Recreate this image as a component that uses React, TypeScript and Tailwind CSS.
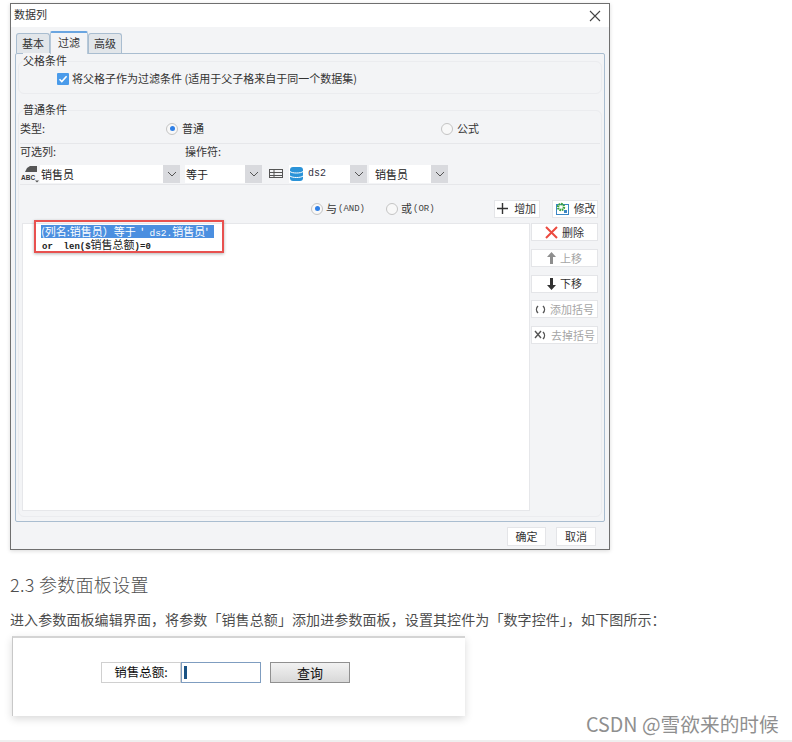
const cjk = "font-['Noto_Sans_CJK_SC','Noto_Sans',sans-serif]";

const Chevron = () => (
  <svg width="10" height="6" viewBox="0 0 10 6" fill="none" stroke="#555" strokeWidth="1">
    <path d="M1 1l4 4 4-4" />
  </svg>
);

const Combo = ({ w, text, textClass = "pl-px text-[11px] text-[#222]" }: { w: string; text: string; textClass?: string }) => (
  <div className={`${w} h-[18px] flex bg-white shrink-0`}>
    <div className={`flex-1 leading-[18px] whitespace-nowrap overflow-hidden ${textClass}`}>{text}</div>
    <div className="w-[17px] bg-[#d9dade] flex items-center justify-center">
      <Chevron />
    </div>
  </div>
);

const Radio = ({ on }: { on?: boolean }) => (
  <span className="w-[12px] h-[12px] rounded-full border border-[#c4c4c4] bg-[#f8f8f8] flex items-center justify-center shrink-0">
    {on && <span className="w-[5px] h-[5px] rounded-full bg-[#2f7fe6]" />}
  </span>
);

const SideButton = ({ icon, label, muted }: { icon: React.ReactNode; label: string; muted?: boolean }) => (
  <div className={`h-[18px] bg-white border border-[#e4e5e8] flex items-center justify-center gap-[4px] text-[11px] whitespace-nowrap ${muted ? "text-[#a5a5a5]" : "text-[#333]"}`}>
    {icon}
    <span>{label}</span>
  </div>
);

const Legend = ({ text }: { text: string }) => (
  <div className="absolute left-[4px] top-[-9px] text-[11px] leading-[14px] text-[#333] bg-[#f3f4f6] pr-px">{text}</div>
);

const Tab = ({ text, active }: { text: string; active?: boolean }) => (
  <div
    className={`flex items-center justify-center text-[11px] text-[#333] ${
      active
        ? "w-[38px] h-[23px] bg-[#f3f4f6] border-t-2 border-x border-t-[#6aa5e0] border-x-[#b6c8d8] rounded-t-[2px] pb-[3px] z-10 -mb-px"
        : "w-[34px] h-[20px] bg-[#e2e6ea] border-t border-x border-[#a9bdd0] rounded-t-[3px]"
    }`}
  >
    {text}
  </div>
);

export default function App() {
  return (
    <div className={`relative w-[792px] h-[742px] bg-white overflow-hidden ${cjk}`}>
      {/* dialog screenshot */}
      <div className="ml-[10px] mt-[3px] w-[600px] h-[547px] border border-[#6f6f6f] shadow-[0_1px_4px_rgba(0,0,0,0.15)] bg-[#f3f4f6] flex flex-col">
        <div className="h-[23px] bg-white flex items-center justify-between pl-[3px] pr-[8px] shrink-0">
          <span className="text-[11px] text-[#333] -mt-[2px]">数据列</span>
          <svg width="12" height="12" viewBox="0 0 12 12" stroke="#444" strokeWidth="1.1">
            <path d="M1 1l10 10M11 1L1 11" />
          </svg>
        </div>

        <div className="flex pl-[5px] items-end h-[26px] shrink-0">
          <Tab text="基本" />
          <Tab text="过滤" active />
          <Tab text="高级" />
        </div>

        {/* tab panel */}
        <div className="ml-[4px] w-[590px] h-[469px] border border-[#a9bdd0] rounded-[2px] px-[2px] pt-[7px] shrink-0 flex flex-col">
          <div className="relative h-[33px] border border-[#ebecef] rounded-[6px] flex items-center pl-[38px] pt-[2px] gap-[3px] shrink-0">
            <Legend text="父格条件" />
            <span className="w-[12px] h-[12px] bg-[#4a9bea] rounded-[1px] flex items-center justify-center shrink-0">
              <svg width="10" height="10" viewBox="0 0 10 10" fill="none" stroke="white" strokeWidth="1.5">
                <path d="M1.5 5.2l2.3 2.4 4.8-5.4" />
              </svg>
            </span>
            <span className="text-[11px] text-[#333] whitespace-nowrap">将父格子作为过滤条件 (适用于父子格来自于同一个数据集)</span>
          </div>

          <div className="relative mt-[16px] h-[407px] border border-[#ebecef] rounded-[6px] flex flex-col shrink-0">
            <Legend text="普通条件" />
            {/* type row */}
            <div className="h-[33px] flex items-center border-b border-[#e6e7ea] mx-px shrink-0 pt-[3px]">
              <span className="w-[146px] text-[11px] text-[#333]">类型:</span>
              <Radio on />
              <span className="ml-[4px] text-[11px] text-[#333]">普通</span>
              <span className="ml-[237px]"><Radio /></span>
              <span className="ml-[4px] text-[11px] text-[#333]">公式</span>
            </div>
            {/* column labels */}
            <div className="h-[21px] flex items-center text-[11px] text-[#333] mx-px shrink-0 pb-[7px]">
              <span className="w-[165px]">可选列:</span>
              <span>操作符:</span>
            </div>
            {/* combos */}
            <div className="h-[20px] flex items-start mx-px border-b border-[#e6e7ea] shrink-0">
              <svg width="20" height="18" viewBox="0 0 20 18" className="shrink-0">
                <path d="M7 3l3-2h7v6H8L5 7z" fill="#555" />
                <text x="1" y="15" fontSize="6.5" fontWeight="700" fill="#333" fontFamily="Liberation Sans">ABC</text>
                <path d="M15 15.500h4l-2 2z" fill="#555" />
              </svg>
              <Combo w="w-[140px]" text="销售员" />
              <div className="w-[5px] shrink-0" />
              <Combo w="w-[77px]" text="等于" />
              <div className="w-[7px] shrink-0" />
              <svg width="15" height="18" viewBox="0 0 15 18" fill="none" stroke="#555" className="shrink-0">
                <rect x=".5" y="4.500" width="13" height="8" />
                <path d="M.5 7.500h13M.5 10.500h13M5 4.500v8" />
              </svg>
              <span className="w-[5px] shrink-0" />
              <div className="flex h-[18px] w-[78px] bg-white shrink-0">
                <svg width="15" height="18" viewBox="0 0 15 18" className="shrink-0">
                  <rect x="1" y="2" width="13" height="14" rx="3" fill="#2b93d8" />
                  <path d="M1 6.500c2 2 11 2 13 0M1 11c2 2 11 2 13 0" fill="none" stroke="white" strokeWidth="1" />
                </svg>
                <Combo w="w-[63px]" text="ds2" textClass="pl-[4px] font-['Liberation_Mono',monospace] text-[10px] text-[#334]" />
              </div>
              <Combo w="w-[79px] ml-[2px]" text="销售员" textClass="pl-[6px] text-[11px] text-[#222]" />
            </div>
            {/* and/or row */}
            <div className="h-[38px] flex items-center mx-px shrink-0 pt-[9px]">
              <span className="ml-[291px]"><Radio on /></span>
              <span className="ml-[3px] text-[11px] text-[#333]">与</span>
              <span className="ml-px mt-[2px] font-['Liberation_Mono',monospace] text-[9px] text-[#444]">(AND)</span>
              <span className="ml-[21px]"><Radio /></span>
              <span className="ml-[3px] text-[11px] text-[#333]">或</span>
              <span className="ml-px mt-[2px] font-['Liberation_Mono',monospace] text-[9px] text-[#444]">(OR)</span>
              <div className="ml-[59px] w-[46px] h-[18px] bg-white border border-[#e4e5e8] flex items-center justify-center gap-[6px] text-[11px] text-[#333]">
                <svg width="11" height="11" viewBox="0 0 11 11" stroke="#333" strokeWidth="1.4"><path d="M5.500 0v11M0 5.500h11" /></svg>
                增加
              </div>
              <div className="ml-[12px] w-[46px] h-[18px] bg-white border border-[#e4e5e8] flex items-center pl-[2px] gap-[5px] text-[11px] text-[#333] whitespace-nowrap">
                <svg width="14" height="13" viewBox="0 0 14 13" className="shrink-0">
                  <rect x="1.500" y="2.500" width="12" height="10" fill="none" stroke="#3b86c4" />
                  <circle cx="6" cy="5" r="3" fill="none" stroke="#3da33d" strokeWidth="2.400" strokeDasharray="1.600 .7" />
                  <rect x="9" y="8" width="3" height="3" fill="#3b86c4" />
                </svg>
                修改
              </div>
            </div>
            {/* list + side buttons */}
            <div className="flex flex-1 min-h-0 pl-[3px] pb-[5px]">
              <div className="relative w-[508px] bg-white border border-[#e6e7ea] shrink-0 pl-[18px] pt-[1px] text-[11px] leading-[13px]">
                <div className="w-[173px] h-[13px] bg-[#4b8fe0] text-white whitespace-pre">(列名:销售员）等于  '<span className="font-['Liberation_Mono',monospace] text-[9.5px]"> ds2.</span>销售员'</div>
                <div className="h-[13px] pl-px text-[#222] whitespace-pre font-['Liberation_Mono',monospace] text-[9px] font-bold">or  len($<span className={`${cjk} text-[11px] font-normal`}>销售总额</span>)=0</div>
                {/* red annotation box */}
                <div className="absolute left-[11px] top-[-4px] w-[190px] h-[33px] border-2 border-[#e8514f] shadow-[0_1px_3px_rgba(0,0,0,0.3)]" />
              </div>
              <div className="flex flex-col w-[67px] ml-px shrink-0 gap-[7.75px]">
                <SideButton label="删除" icon={
                  <svg width="13" height="13" viewBox="0 0 13 13" stroke="#ec4a3f" strokeWidth="2"><path d="M1 1l11 11M12 1L1 12" /></svg>
                } />
                <SideButton label="上移" muted icon={
                  <svg width="9" height="12" viewBox="0 0 9 12" fill="#8e8e8e"><path d="M4.500 0L9 5H6v7H3V5H0z" /></svg>
                } />
                <SideButton label="下移" icon={
                  <svg width="9" height="12" viewBox="0 0 9 12" fill="#333"><path d="M4.500 12L9 7H6V0H3v7H0z" /></svg>
                } />
                <SideButton label="添加括号" muted icon={
                  <svg width="11" height="9" viewBox="0 0 11 9" fill="none" stroke="#555" strokeWidth="1.400"><path d="M3 1C1 3 1 6 3 8M8 1c2 2 2 5 0 7" /></svg>
                } />
                <SideButton label="去掉括号" muted icon={
                  <svg width="13" height="11" viewBox="0 0 13 11" fill="none" stroke="#555" strokeWidth="1.400"><path d="M1 1l6 7M7 1L1 8M9 2c2 2 2 5 0 7" /></svg>
                } />
              </div>
            </div>
          </div>
        </div>

        <div className="flex justify-end gap-[10px] pr-[13px] pt-[5px]">
          <div className="w-[39px] h-[19px] bg-white border border-[#e4e5e8] flex items-center justify-center text-[11px] text-[#333]">确定</div>
          <div className="w-[40px] h-[19px] bg-white border border-[#e4e5e8] flex items-center justify-center text-[11px] text-[#333]">取消</div>
        </div>
      </div>

      <h2 className="ml-[10px] mt-[21px] text-[18px] leading-[26px] font-light text-[#4f4f4f] tracking-[0.3px]">2.3 参数面板设置</h2>
      <p className="ml-[10px] mt-[10px] text-[14px] leading-[24px] text-[#4d4d4d] whitespace-nowrap tracking-[0.1px]">
        进入参数面板编辑界面，将参数「销售总额」添加进参数面板，设置其控件为「数字控件」，如下图所示：
      </p>

      {/* parameter panel screenshot */}
      <div className="ml-[12px] mt-[5px] w-[453px] h-[80px] bg-white border-t-2 border-l border-t-[#d4d4d4] border-l-[#c8c8c8] shadow-[0_3px_8px_rgba(0,0,0,0.15)] flex items-start pl-[88px] pt-[24px]">
        <div className="w-[80px] h-[21px] border border-[#d0d0d0] flex items-center justify-center text-[12.5px] text-[#111] shrink-0 whitespace-nowrap">销售总额:</div>
        <div className="w-[80px] h-[21px] border border-[#7f9dc0] flex items-center pl-[2px] shrink-0">
          <div className="w-[3px] h-[13px] bg-[#1b5384]" />
        </div>
        <div className="ml-[9px] w-[80px] h-[21px] border border-[#909090] bg-gradient-to-b from-[#f2f2f2] to-[#d8d8d8] flex items-center justify-center text-[13px] text-[#111]">查询</div>
      </div>

      <div className="absolute left-[586px] top-[711px] text-[19.7px] leading-[26px] text-[#8f8f8f] whitespace-nowrap">CSDN @雪欲来的时候</div>
      <div className="absolute left-0 right-0 bottom-0 h-[2px] bg-[#efefef]" />
    </div>
  );
}
